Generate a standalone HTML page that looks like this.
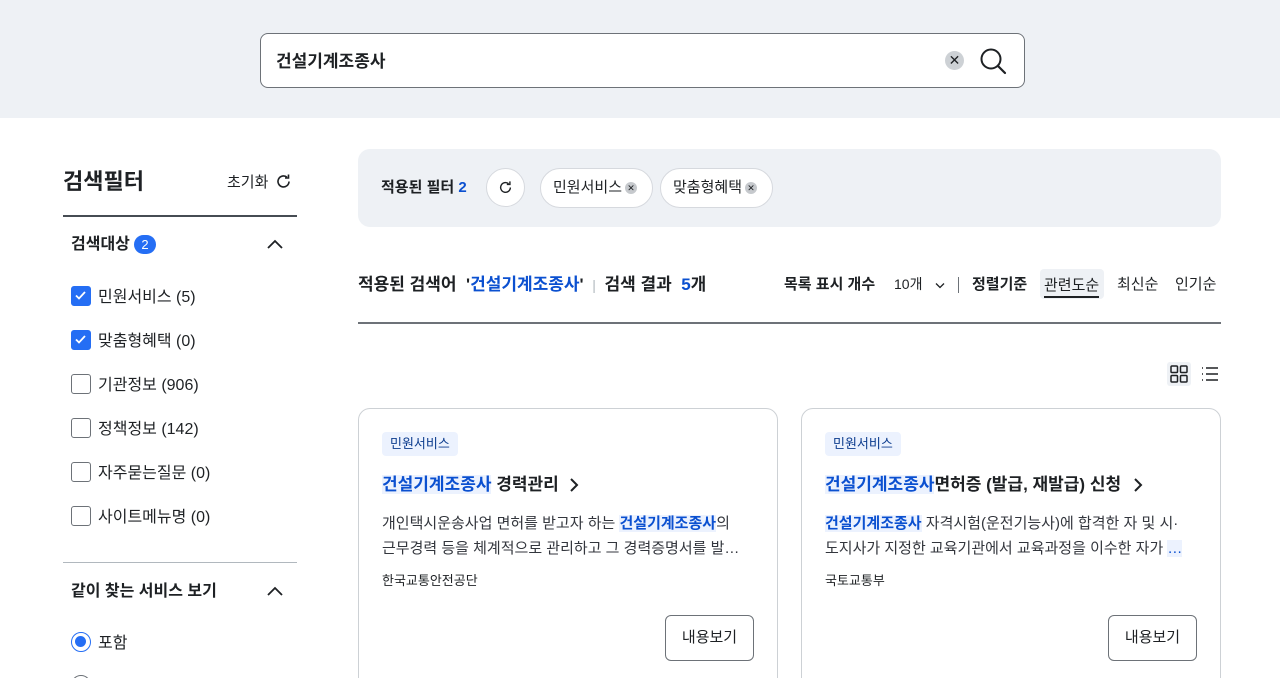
<!DOCTYPE html>
<html><head><meta charset="utf-8"><style>
*{box-sizing:border-box;margin:0;padding:0}
html,body{width:1280px;height:678px;overflow:hidden}
body{background:#fff;font-family:"Liberation Sans","Noto Sans CJK KR",sans-serif;color:#1e2124;position:relative;line-height:1.2}
.a{position:absolute;white-space:nowrap}
.top{left:0;top:0;width:1280px;height:118px;background:#eef1f5}
.sb{left:260px;top:33px;width:765px;height:55px;background:#fff;border:1px solid #6d7278;border-radius:8px}
.cb{width:20px;height:20px;border-radius:3px;border:1.5px solid #6d7278;background:#fff}
.cb.on{background:#256ef4;border-color:#256ef4}
.lbl{font-size:16px;color:#1e2124}
.chip{height:40px;border:1px solid #d6d9de;border-radius:20px;background:#fff;font-size:15px;display:flex;align-items:center;padding:0 12px}
.x{display:inline-block;width:12px;height:12px;border-radius:50%;background:#c6c9cd;font-size:9px;line-height:12px;text-align:center;margin-left:3px;color:#1e2124}
.card{width:420px;height:290px;border:1px solid #cdd1d5;border-radius:12px;background:#fff}
.tag{font-size:13px;color:#0b3b8d;background:#ecf2fe;border-radius:4px;padding:4px 8px}
.hl{background:#ecf2fe;color:#0b50d0}
.btn{width:89px;height:46px;border:1px solid #6d7278;border-radius:6px;font-size:15px;display:flex;align-items:center;justify-content:center;background:#fff}
</style></head><body>
<div class="a top"></div>
<div class="a sb"></div>
<div class="a" style="left:276px;top:52px;font-size:17px;font-weight:bold">건설기계조종사</div>
<div class="a" style="left:945px;top:51px;width:19px;height:19px;border-radius:50%;background:#cdd1d5;text-align:center;font-size:14px;line-height:19px">✕</div>
<svg class="a" style="left:978px;top:46px" width="30" height="30" viewBox="0 0 30 30"><circle cx="13" cy="13" r="9.5" fill="none" stroke="#1e2124" stroke-width="2"/><path d="M20 20l7 7" stroke="#1e2124" stroke-width="2.2" stroke-linecap="round"/></svg>

<div class="a" style="left:63px;top:169px;font-size:22px;font-weight:bold">검색필터</div>
<div class="a" style="left:227px;top:174px;font-size:15px">초기화</div>
<svg class="a" style="left:275px;top:173px" width="17" height="17" viewBox="0 0 17 17"><path d="M14 8.5A5.5 5.5 0 1 1 12 4.2" fill="none" stroke="#1e2124" stroke-width="1.6"/><path d="M13.5 1.5v3.5h-3.5" fill="none" stroke="#1e2124" stroke-width="1.6"/></svg>
<div class="a" style="left:63px;top:215px;width:234px;height:2px;background:#464c53"></div>
<div class="a" style="left:71px;top:235px;font-size:16px;font-weight:bold">검색대상</div>
<div class="a" style="left:134px;top:235px;width:22px;height:19px;border-radius:10px;background:#256ef4;color:#fff;font-size:13px;text-align:center;line-height:19px">2</div>
<svg class="a" style="left:266px;top:238px" width="18" height="12" viewBox="0 0 18 12"><path d="M2 10l7-7 7 7" fill="none" stroke="#1e2124" stroke-width="1.8"/></svg>

<div class="a cb on" style="left:71px;top:286px"><svg width="17" height="17" viewBox="0 0 17 17"><path d="M4 8.5l3 3 6-6.5" fill="none" stroke="#fff" stroke-width="1.8"/></svg></div>
<div class="a lbl" style="left:98px;top:288px">민원서비스 (5)</div>
<div class="a cb on" style="left:71px;top:330px"><svg width="17" height="17" viewBox="0 0 17 17"><path d="M4 8.5l3 3 6-6.5" fill="none" stroke="#fff" stroke-width="1.8"/></svg></div>
<div class="a lbl" style="left:98px;top:332px">맞춤형혜택 (0)</div>
<div class="a cb" style="left:71px;top:374px"></div><div class="a lbl" style="left:98px;top:376px">기관정보 (906)</div>
<div class="a cb" style="left:71px;top:418px"></div><div class="a lbl" style="left:98px;top:420px">정책정보 (142)</div>
<div class="a cb" style="left:71px;top:462px"></div><div class="a lbl" style="left:98px;top:464px">자주묻는질문 (0)</div>
<div class="a cb" style="left:71px;top:506px"></div><div class="a lbl" style="left:98px;top:508px">사이트메뉴명 (0)</div>
<div class="a" style="left:63px;top:562px;width:234px;height:1px;background:#b1b8be"></div>
<div class="a" style="left:71px;top:582px;font-size:16px;font-weight:bold">같이 찾는 서비스 보기</div>
<svg class="a" style="left:266px;top:585px" width="18" height="12" viewBox="0 0 18 12"><path d="M2 10l7-7 7 7" fill="none" stroke="#1e2124" stroke-width="1.8"/></svg>
<div class="a" style="left:71px;top:632px;width:20px;height:20px;border-radius:50%;border:1.5px solid #256ef4;background:#fff"><div style="margin:3px;width:11px;height:11px;border-radius:50%;background:#256ef4"></div></div>
<div class="a lbl" style="left:98px;top:634px">포함</div>
<div class="a" style="left:71px;top:675px;width:20px;height:20px;border-radius:50%;border:1.5px solid #6d7278"></div>

<div class="a" style="left:358px;top:149px;width:863px;height:78px;background:#eef1f5;border-radius:12px"></div>
<div class="a" style="left:381px;top:179px;font-size:15px;font-weight:bold">적용된 필터 <span style="color:#0b50d0">2</span></div>
<div class="a" style="left:486px;top:168px;width:39px;height:39px;border:1px solid #d6d9de;border-radius:50%;background:#fff"></div>
<svg class="a" style="left:498px;top:180px" width="15" height="15" viewBox="0 0 17 17"><path d="M14 8.5A5.5 5.5 0 1 1 12 4.2" fill="none" stroke="#1e2124" stroke-width="1.6"/><path d="M13.5 1.5v3.5h-3.5" fill="none" stroke="#1e2124" stroke-width="1.6"/></svg>
<div class="a chip" style="left:540px;top:168px;width:113px">민원서비스<span class="x">✕</span></div>
<div class="a chip" style="left:660px;top:168px;width:113px">맞춤형혜택<span class="x">✕</span></div>

<div class="a" style="left:358px;top:275px;font-size:17px;font-weight:bold">적용된 검색어 &nbsp;'<span style="color:#0b50d0">건설기계조종사</span>' <span style="color:#b1b8be;font-weight:normal;font-size:14px">&nbsp;|&nbsp;</span> 검색 결과 &nbsp;<span style="color:#0b50d0">5</span>개</div>
<div class="a" style="left:784px;top:276px;font-size:15px;font-weight:bold">목록 표시 개수</div>
<div class="a" style="left:894px;top:276px;font-size:14px">10개</div>
<svg class="a" style="left:935px;top:282px" width="10" height="7" viewBox="0 0 10 7"><path d="M1 1.5l4 4 4-4" fill="none" stroke="#1e2124" stroke-width="1.3"/></svg>
<div class="a" style="left:958px;top:277px;width:1px;height:16px;background:#6d7278"></div>
<div class="a" style="left:972px;top:276px;font-size:15px;font-weight:bold">정렬기준</div>
<div class="a" style="left:1040px;top:269px;width:64px;height:30px;background:#eef1f5;border-radius:4px"></div>
<div class="a" style="left:1044px;top:276px;font-size:15px;border-bottom:2px solid #1e2124;line-height:20px">관련도순</div>
<div class="a" style="left:1117px;top:276px;font-size:15px">최신순</div>
<div class="a" style="left:1175px;top:276px;font-size:15px">인기순</div>
<div class="a" style="left:358px;top:322px;width:863px;height:2px;background:#6d7278"></div>

<div class="a" style="left:1167px;top:362px;width:24px;height:24px;background:#eef1f5;border-radius:3px"></div>
<svg class="a" style="left:1170px;top:365px" width="18" height="18" viewBox="0 0 18 18" fill="none" stroke="#1e2124" stroke-width="1.5"><rect x="1" y="1" width="6.5" height="6.5" rx="1"/><rect x="10.5" y="1" width="6.5" height="6.5" rx="1"/><rect x="1" y="10.5" width="6.5" height="6.5" rx="1"/><rect x="10.5" y="10.5" width="6.5" height="6.5" rx="1"/></svg>
<svg class="a" style="left:1201px;top:365px" width="18" height="18" viewBox="0 0 18 18" stroke="#1e2124" stroke-width="1.5"><path d="M1 3h1M1 9h1M1 15h1M5 3h12M5 9h12M5 15h12"/></svg>

<div class="a card" style="left:358px;top:408px"></div>
<div class="a tag" style="left:382px;top:432px">민원서비스</div>
<div class="a" style="left:382px;top:475px;font-size:17px;font-weight:bold"><span class="hl">건설기계조종사</span> 경력관리</div>
<svg class="a" style="left:569px;top:477px" width="10" height="16" viewBox="0 0 10 16"><path d="M2 2l6 6-6 6" fill="none" stroke="#1e2124" stroke-width="2"/></svg>
<div class="a" style="left:382px;top:511px;font-size:15px;line-height:25px;color:#33363d">개인택시운송사업 면허를 받고자 하는 <b class="hl">건설기계조종사</b>의<br>근무경력 등을 체계적으로 관리하고 그 경력증명서를 발…</div>
<div class="a" style="left:382px;top:573px;font-size:13px">한국교통안전공단</div>
<div class="a btn" style="left:665px;top:615px">내용보기</div>

<div class="a card" style="left:801px;top:408px"></div>
<div class="a tag" style="left:825px;top:432px">민원서비스</div>
<div class="a" style="left:825px;top:475px;font-size:17px;font-weight:bold"><span class="hl">건설기계조종사</span>면허증 (발급, 재발급) 신청</div>
<svg class="a" style="left:1133px;top:477px" width="10" height="16" viewBox="0 0 10 16"><path d="M2 2l6 6-6 6" fill="none" stroke="#1e2124" stroke-width="2"/></svg>
<div class="a" style="left:825px;top:511px;font-size:15px;line-height:25px;color:#33363d"><b class="hl">건설기계조종사</b> 자격시험(운전기능사)에 합격한 자 및 시·<br>도지사가 지정한 교육기관에서 교육과정을 이수한 자가 <span class="hl">…</span></div>
<div class="a" style="left:825px;top:573px;font-size:13px">국토교통부</div>
<div class="a btn" style="left:1108px;top:615px">내용보기</div>
</body></html>
